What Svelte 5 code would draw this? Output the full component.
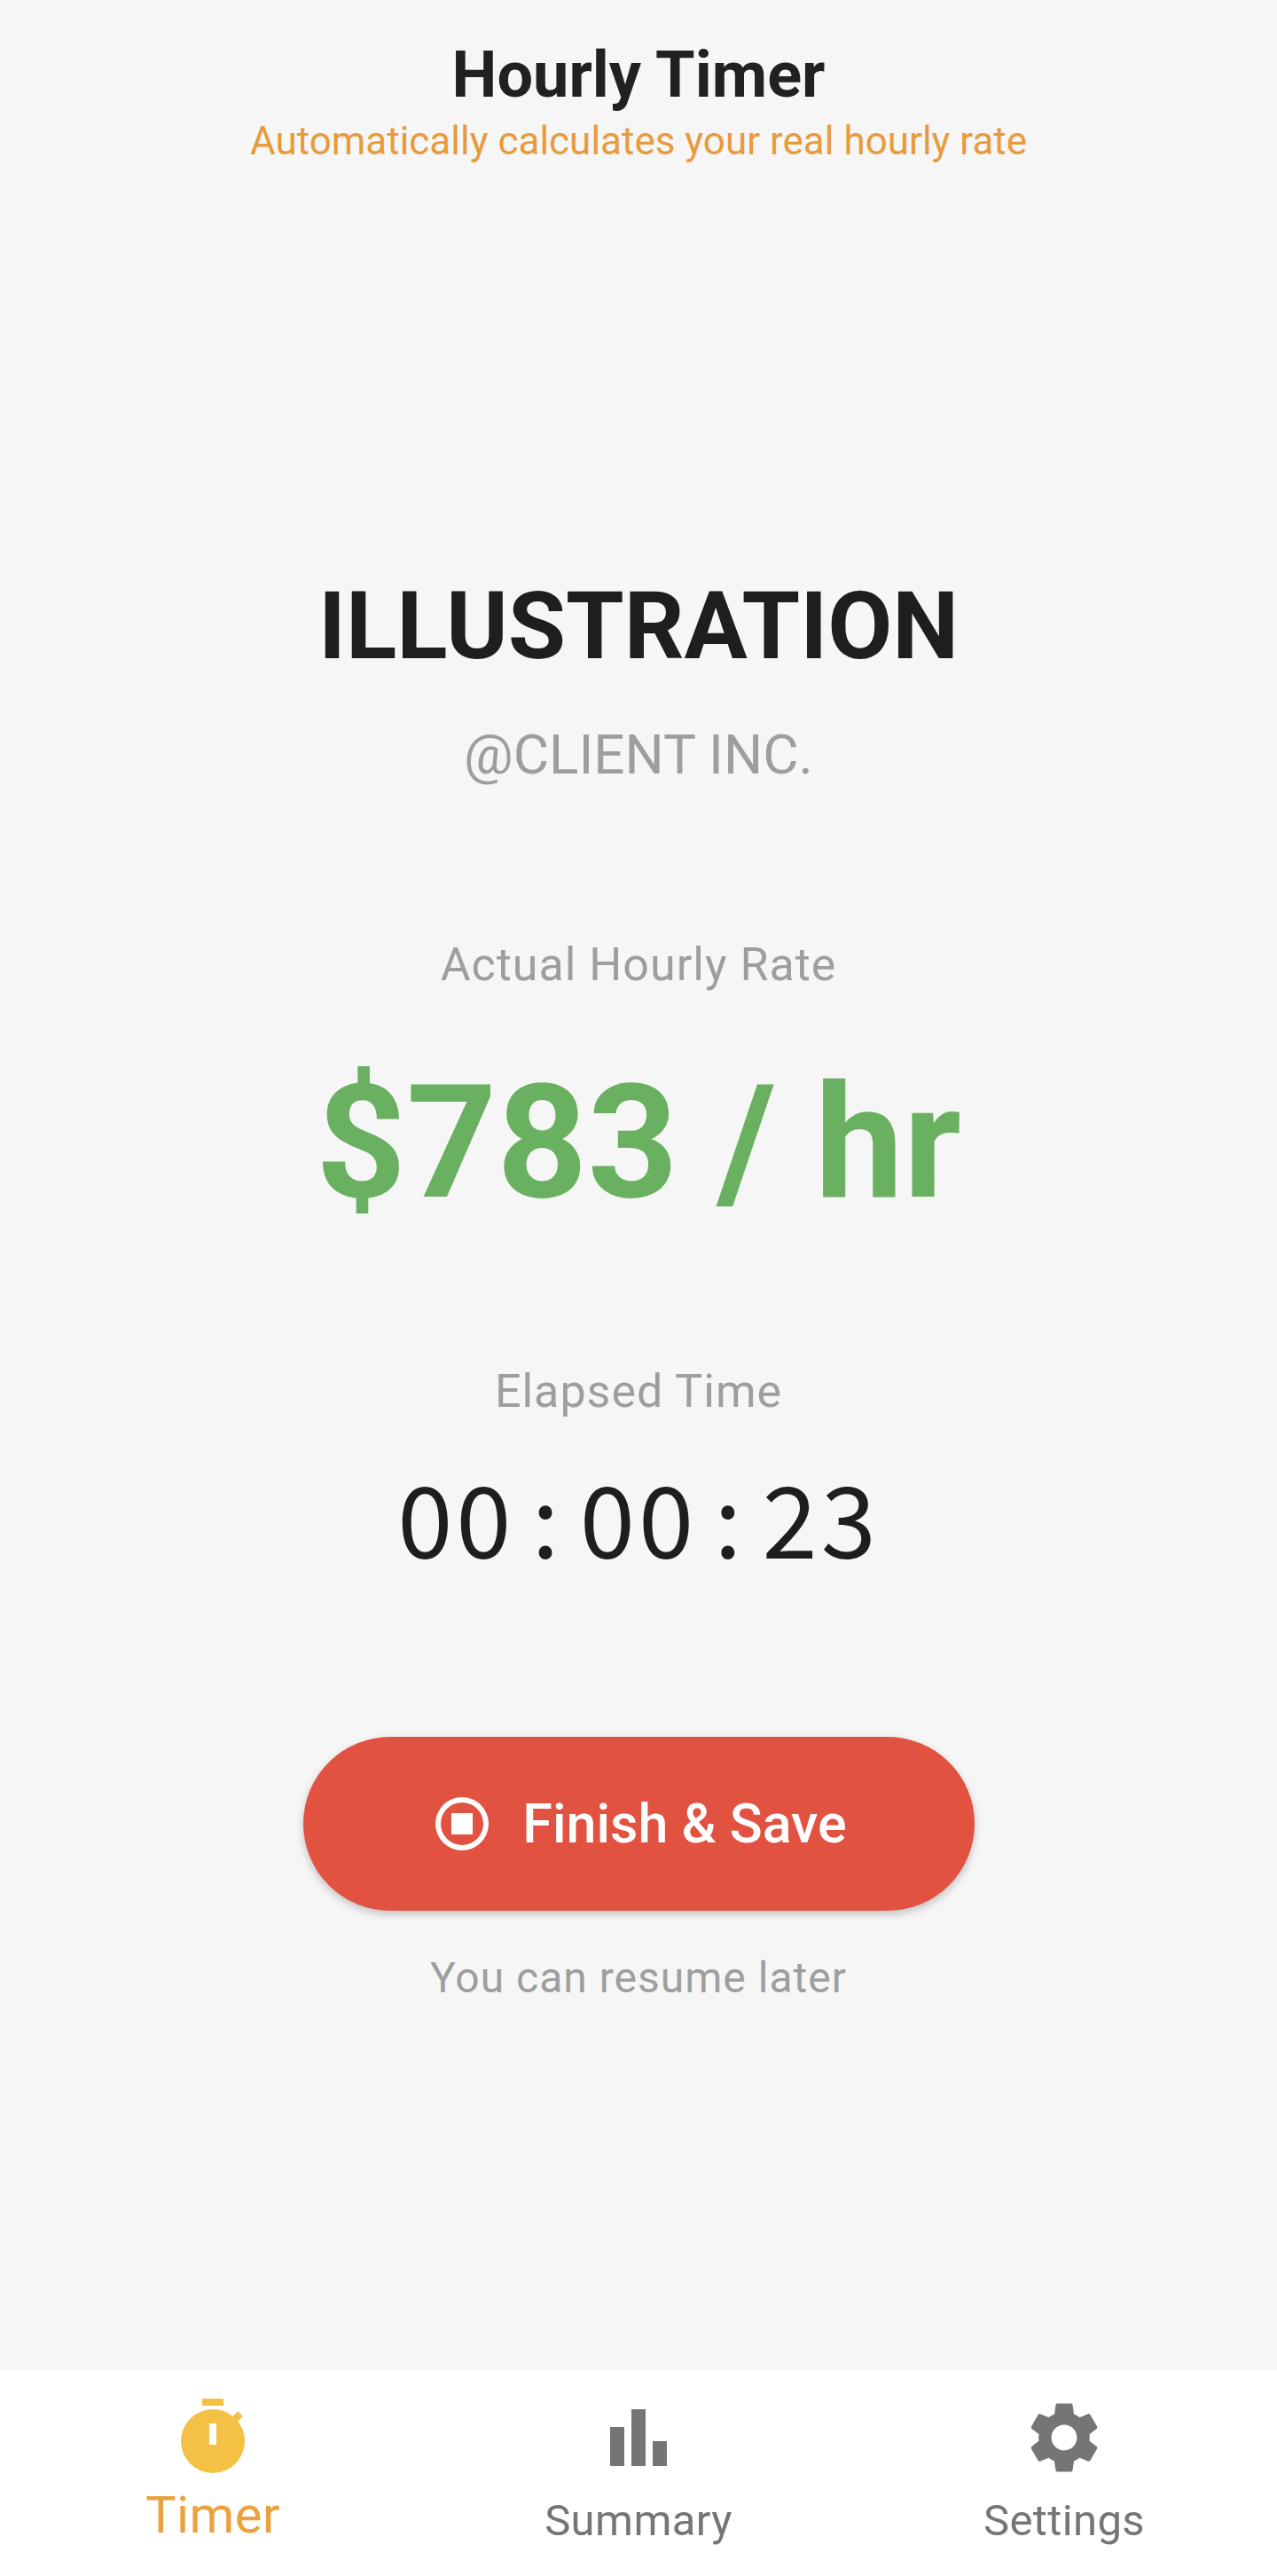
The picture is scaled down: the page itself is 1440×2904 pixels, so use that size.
<script>
	const tabs = [
		{ label: 'Timer', active: true },
		{ label: 'Summary', active: false },
		{ label: 'Settings', active: false }
	];
</script>

<div class="page">
	<header class="top">
		<h1>Hourly Timer</h1>
		<p class="subtitle">Automatically calculates your real hourly rate</p>
	</header>

	<main class="body">
		<section class="project">
			<h2>ILLUSTRATION</h2>
			<p class="client">@CLIENT INC.</p>
		</section>

		<section class="rate">
			<p class="label">Actual Hourly Rate</p>
			<p class="amount">$783 / hr</p>
		</section>

		<section class="elapsed">
			<p class="label">Elapsed Time</p>
			<p class="clock">00 : 00 : 23</p>
		</section>

		<button class="finish" type="button">
			<svg viewBox="0 0 24 24" width="72" height="72" aria-hidden="true">
				<path fill="#fff" d="M12 2a10 10 0 1 0 0 20 10 10 0 0 0 0-20Zm0 18a8 8 0 1 1 0-16 8 8 0 0 1 0 16Z" />
				<rect x="8" y="8" width="8" height="8" fill="#fff" />
			</svg>
			<span>Finish &amp; Save</span>
		</button>
		<p class="hint">You can resume later</p>
	</main>

	<nav class="tabs">
		{#each tabs as tab}
			<div class="tab" class:active={tab.active}>
				{#if tab.label === 'Timer'}
					<svg viewBox="0 0 24 24" width="96" height="96" aria-hidden="true">
						<path fill="#f4c145" d="M15 1H9v2h6V1Zm4.03 6.39 1.42-1.42c-.43-.51-.9-.99-1.41-1.41l-1.42 1.42A8.96 8.96 0 0 0 12 4a9 9 0 1 0 9 9c0-2.12-.74-4.07-1.97-5.61ZM13 14h-2V8h2v6Z" />
					</svg>
				{:else if tab.label === 'Summary'}
					<svg viewBox="0 0 96 96" width="96" height="96" aria-hidden="true">
						<path fill="#757575" d="M16 36h16v44H16V36Zm24-20h16v64H40V16Zm24 36h16v28H64V52Z" />
					</svg>
				{:else}
					<svg viewBox="0 0 24 24" width="96" height="96" aria-hidden="true">
						<path fill="#757575" d="M19.14 12.94c.04-.3.06-.61.06-.94 0-.32-.02-.64-.07-.94l2.03-1.58a.49.49 0 0 0 .12-.61l-1.92-3.32a.49.49 0 0 0-.59-.22l-2.39.96c-.5-.38-1.03-.7-1.62-.94l-.36-2.54a.48.48 0 0 0-.48-.41h-3.84c-.24 0-.43.17-.47.41l-.36 2.54c-.59.24-1.13.57-1.62.94l-2.39-.96a.49.49 0 0 0-.59.22L2.74 8.87c-.12.21-.08.47.12.61l2.03 1.58c-.05.3-.09.63-.09.94s.02.64.07.94l-2.03 1.58a.49.49 0 0 0-.12.61l1.92 3.32c.12.22.37.29.59.22l2.39-.96c.5.38 1.03.7 1.62.94l.36 2.54c.05.24.24.41.48.41h3.84c.24 0 .44-.17.47-.41l.36-2.54c.59-.24 1.13-.56 1.62-.94l2.39.96c.22.08.47 0 .59-.22l1.92-3.32c.12-.22.07-.47-.12-.61l-2.01-1.58ZM12 15.6A3.61 3.61 0 0 1 8.4 12c0-1.98 1.62-3.6 3.6-3.6s3.6 1.62 3.6 3.6-1.62 3.6-3.6 3.6Z" />
					</svg>
				{/if}
				<span>{tab.label}</span>
			</div>
		{/each}
	</nav>
</div>

<style>
	:global(body) {
		margin: 0;
		background: #f6f6f6;
	}

	.page {
		height: 2904px;
		display: flex;
		flex-direction: column;
		background: #f6f6f6;
		font-family: Roboto, 'Liberation Sans', sans-serif;
		text-align: center;
	}

	p, h1, h2 {
		margin: 0;
	}

	.top {
		padding-top: 41px;
	}

	h1 {
		font-size: 72px;
		line-height: 88px;
		font-weight: 700;
		color: #212121;
	}

	.subtitle {
		margin-top: 4px;
		font-size: 44px;
		line-height: 52px;
		color: #e99a3c;
	}

	.body {
		flex: 1;
		display: flex;
		flex-direction: column;
		align-items: center;
	}

	.project {
		margin-top: 459px;
	}

	h2 {
		font-size: 106px;
		line-height: 124px;
		font-weight: 700;
		color: #1e1e1e;
	}

	.client {
		margin-top: 47px;
		font-size: 62px;
		line-height: 72px;
		color: #9e9e9e;
	}

	.rate {
		margin-top: 171px;
	}

	.label {
		font-size: 52px;
		line-height: 60px;
		letter-spacing: 1px;
		color: #9e9e9e;
	}

	.amount {
		margin-top: 66px;
		font-size: 178px;
		line-height: 208px;
		font-weight: 700;
		color: #69b161;
	}

	.elapsed {
		margin-top: 147px;
	}

	.clock {
		margin-top: 33px;
		font-family: 'Noto Sans CJK SC', 'Noto Sans', sans-serif;
		font-size: 112px;
		line-height: 152px;
		letter-spacing: 4px;
		word-spacing: -10px;
		color: #1e1e1e;
	}

	.finish {
		margin-top: 174px;
		width: 757px;
		height: 196px;
		border: none;
		border-radius: 98px;
		background: #e25241;
		box-shadow: 0 4px 10px rgba(0, 0, 0, 0.22);
		display: flex;
		align-items: center;
		justify-content: center;
		gap: 32px;
		color: #fff;
		font-family: inherit;
		font-size: 61px;
		font-weight: 500;
	}

	.hint {
		margin-top: 48px;
		font-size: 48px;
		line-height: 56px;
		letter-spacing: 1px;
		color: #9e9e9e;
	}

	.tabs {
		height: 232px;
		box-sizing: border-box;
		padding-top: 28px;
		display: grid;
		grid-template-columns: repeat(3, 1fr);
		background: #fff;
	}

	.tab {
		display: flex;
		flex-direction: column;
		align-items: center;
		font-size: 49px;
		line-height: 56px;
		letter-spacing: 0.4px;
		color: #757575;
	}

	.tab span {
		margin-top: 18px;
	}

	.tab.active {
		color: #e9a23f;
		font-size: 58px;
		line-height: 62px;
	}

	.tab.active span {
		margin-top: 8px;
	}
</style>
